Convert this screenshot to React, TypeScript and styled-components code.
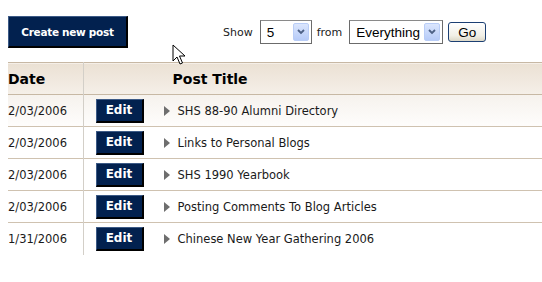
import React from 'react';
import styled, { createGlobalStyle } from 'styled-components';

interface Post {
  id: number;
  date: string;
  title: string;
}

const POSTS: Post[] = [
  { id: 1, date: '2/03/2006', title: 'SHS 88-90 Alumni Directory' },
  { id: 2, date: '2/03/2006', title: 'Links to Personal Blogs' },
  { id: 3, date: '2/03/2006', title: 'SHS 1990 Yearbook' },
  { id: 4, date: '2/03/2006', title: 'Posting Comments To Blog Articles' },
  { id: 5, date: '1/31/2006', title: 'Chinese New Year Gathering 2006' }
];

const GlobalStyle = createGlobalStyle`
  html, body {
    margin: 0;
    padding: 0;
    background: #ffffff;
    overflow: hidden;
  }
  body {
    font-family: 'DejaVu Sans', Verdana, sans-serif;
    color: #000;
  }
`;

const Page = styled.div`
  position: relative;
  width: 542px;
  height: 282px;
  padding-top: 16px;
  box-sizing: border-box;
`;

const Toolbar = styled.div`
  display: flex;
  align-items: center;
  height: 32px;
  padding-left: 8px;
`;

const NavyButton = styled.button<{ $width: number; $height: number; $size: number; $tight?: boolean }>`
  width: ${(p) => p.$width}px;
  height: ${(p) => p.$height}px;
  box-sizing: border-box;
  background: #02214f;
  color: #ffffff;
  font-family: 'DejaVu Sans', Verdana, sans-serif;
  font-weight: 700;
  font-size: ${(p) => p.$size}px;
  letter-spacing: ${(p) => (p.$tight ? '-0.3px' : '0')};
  border-style: solid;
  border-width: 1px 2px 2px 1px;
  border-color: #3c5a86 #000000 #000000 #3c5a86;
  padding: 0;
  margin: 0;
  cursor: pointer;
`;

const Filters = styled.div`
  display: flex;
  align-items: center;
  margin-left: 95px;
  font-size: 11px;
  color: #222;
`;

const Label = styled.span`
  margin: 0 7px 0 0;
`;

const FakeSelect = styled.div<{ $width: number }>`
  display: flex;
  align-items: center;
  justify-content: space-between;
  width: ${(p) => p.$width}px;
  height: 24px;
  box-sizing: border-box;
  border: 1px solid #6b6b6b;
  border-top-color: #8a8a8a;
  background: #fff;
  padding: 0 2px 0 6px;
  margin-right: 5px;
  font-family: 'Liberation Sans', Arial, sans-serif;
  font-size: 13.5px;
  color: #000;
`;

const DropArrow = styled.span`
  display: flex;
  align-items: center;
  justify-content: center;
  width: 16px;
  height: 18px;
  box-sizing: border-box;
  border: 1px solid #b9cdf7;
  border-radius: 2px;
  background: linear-gradient(#dbe6fd, #b6cbf8);
`;

const GoButton = styled.button`
  width: 38px;
  height: 20px;
  box-sizing: border-box;
  margin-left: 0;
  padding: 0;
  border: 1px solid #1c3f73;
  border-radius: 3px;
  background: linear-gradient(#ffffff, #f1efe6 70%, #dcd8c8);
  font-family: 'Liberation Sans', Arial, sans-serif;
  font-size: 13.5px;
  color: #000;
`;

const Table = styled.table`
  margin: 14px 0 0 8px;
  width: 534px;
  border-collapse: collapse;
  table-layout: fixed;
`;

const HeadRow = styled.tr`
  height: 32px;
  background: linear-gradient(#ebe1d4, #f5efe8);
  border-top: 1px solid #c7b8a4;
  border-bottom: 1px solid #c7b8a4;
`;

const HeadCell = styled.th<{ $pad: number }>`
  text-align: left;
  font-size: 14px;
  font-weight: 700;
  padding: 0 0 0 ${(p) => p.$pad}px;
  border-left: ${(p) => (p.$pad ? '1px solid #d3cfc8' : 'none')};
`;

const Row = styled.tr<{ $first: boolean; $last: boolean }>`
  height: 32px;
  background: ${(p) => (p.$first ? 'linear-gradient(#f6f2ed, #fefdfc)' : '#ffffff')};
  border-bottom: ${(p) => (p.$last ? 'none' : '1px solid #cfc2b0')};
`;

const DateCell = styled.td`
  width: 75px;
  padding: 0;
  font-size: 11.5px;
  color: #1a1a1a;
`;

const BodyCell = styled.td`
  padding: 0 0 0 12px;
  border-left: 1px solid #d3cfc8;
`;

const CellLine = styled.div`
  display: flex;
  align-items: center;
`;

const Title = styled.span`
  font-size: 11.5px;
  color: #1a1a1a;
  margin-left: 8px;
`;

const Arrow = styled.span`
  width: 0;
  height: 0;
  margin-left: 20px;
  border-top: 5px solid transparent;
  border-bottom: 5px solid transparent;
  border-left: 6px solid #6e6e6e;
`;

const Pointer = styled.svg`
  position: absolute;
  left: 172px;
  top: 44px;
`;

const Select = ({ value, width }: { value: string; width: number }) => (
  <FakeSelect $width={width}>
    <span>{value}</span>
    <DropArrow>
      <svg width="8" height="6" viewBox="0 0 8 6">
        <path d="M1 1 L4 4 L7 1" fill="none" stroke="#4d6185" strokeWidth="1.8" />
      </svg>
    </DropArrow>
  </FakeSelect>
);

export default function App() {
  return (
    <Page>
      <GlobalStyle />
      <Toolbar>
        <NavyButton $width={120} $height={32} $size={10.5} $tight>
          Create new post
        </NavyButton>
        <Filters>
          <Label>Show</Label>
          <Select value="5" width={52} />
          <Label>from</Label>
          <Select value="Everything" width={94} />
          <GoButton>Go</GoButton>
        </Filters>
      </Toolbar>

      <Table>
        <colgroup>
          <col style={{ width: 75 }} />
          <col />
        </colgroup>
        <thead>
          <HeadRow>
            <HeadCell $pad={0}>Date</HeadCell>
            <HeadCell $pad={89}>Post Title</HeadCell>
          </HeadRow>
        </thead>
        <tbody>
          {POSTS.map((post, i) => (
            <Row key={post.id} $first={i === 0} $last={i === POSTS.length - 1}>
              <DateCell>{post.date}</DateCell>
              <BodyCell>
                <CellLine>
                  <NavyButton $width={48} $height={24} $size={12}>
                    Edit
                  </NavyButton>
                  <Arrow />
                  <Title>{post.title}</Title>
                </CellLine>
              </BodyCell>
            </Row>
          ))}
        </tbody>
      </Table>

      <Pointer width="14" height="22" viewBox="0 0 14 22">
        <path
          d="M1 1 L1 17 L5 13 L8 20 L10.5 19 L7.5 12 L13 12 Z"
          fill="#ffffff"
          stroke="#000000"
          strokeWidth="1"
          strokeLinejoin="miter"
        />
      </Pointer>
    </Page>
  );
}
